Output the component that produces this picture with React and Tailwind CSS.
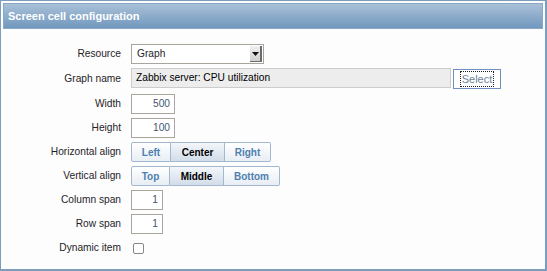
import React from 'react';

const font = { fontFamily: '"Liberation Sans", Arial, sans-serif' };

const Label = ({ children }) => (
  <div className="text-right text-[10.2px] text-[#1f2327]">{children}</div>
);

const NumInput = ({ value, w }) => (
  <div className={`${w} h-[20px] border border-[#aaa59c] bg-white flex items-center justify-end pr-[4px] text-[10.2px] text-[#3f5670]`}>
    {value}
  </div>
);

const Segmented = ({ items, active }) => (
  <div className="flex h-[20px]">
    {items.map(([label, w], i) => (
      <div
        key={label}
        className={`${w} h-full flex items-center justify-center text-[10px] font-bold border border-[#a3b8ce] ${i > 0 ? 'border-l-0' : ''} ${i === 0 ? 'rounded-l-[2px]' : ''} ${i === items.length - 1 ? 'rounded-r-[2px]' : ''} ${
          label === active
            ? 'bg-gradient-to-b from-[#f3f6fa] to-[#d2dde9] text-black border-[#8ea6c0]'
            : 'bg-gradient-to-b from-white to-[#e8eef5] text-[#4f7fae]'
        }`}
      >
        {label}
      </div>
    ))}
  </div>
);

export default function App() {
  return (
    <div style={font} className="w-[547px] h-[271px] bg-[#fdfdfd] border-l border-t border-r-2 border-b-2 border-[#7d9dbe] pt-[2px] px-[2px]">
      <div className="h-[26px] border border-[#8aa7c5] bg-gradient-to-b from-[#a9c0d7] to-[#7198be] flex items-center pl-[4px]">
        <span className="text-white font-bold text-[11px]">Screen cell configuration</span>
      </div>

      <div className="grid grid-cols-[118px_1fr] gap-x-[10px] gap-y-[4px] items-center mt-[15px]">
        <Label>Resource</Label>
        <div className="w-[133px] h-[20px] border border-[#aaa59c] bg-white flex items-center">
          <span className="flex-1 pl-[5px] text-[10.2px] text-[#1f2327]">Graph</span>
          <div className="w-[12px] h-[16px] mr-[1px] bg-gradient-to-b from-[#f0f0f0] to-[#cfcfcf] border-r-2 border-b border-[#6b6b6b] flex items-center justify-center">
            <svg width="7" height="4" viewBox="0 0 7 4"><path d="M0 0h7L3.5 4z" fill="#111" /></svg>
          </div>
        </div>

        <Label>Graph name</Label>
        <div className="flex items-start gap-[2px] h-[22px]">
          <div className="w-[320px] h-[20px] border border-[#cccccc] bg-[#ededed] flex items-center pl-[4px] text-[10.2px] text-black">
            Zabbix server: CPU utilization
          </div>
          <div className="mt-[1px] w-[48px] h-[20px] border border-[#6e8fbf] bg-white flex items-center justify-center">
            <span className="border border-dotted border-[#222] px-[1px] leading-[14px] text-[11px] text-[#6d7f99]">Select</span>
          </div>
        </div>

        <Label>Width</Label>
        <NumInput value="500" w="w-[44px]" />

        <Label>Height</Label>
        <NumInput value="100" w="w-[44px]" />

        <Label>Horizontal align</Label>
        <Segmented items={[['Left', 'w-[40px]'], ['Center', 'w-[54px]'], ['Right', 'w-[46px]']]} active="Center" />

        <Label>Vertical align</Label>
        <Segmented items={[['Top', 'w-[39px]'], ['Middle', 'w-[54px]'], ['Bottom', 'w-[56px]']]} active="Middle" />

        <Label>Column span</Label>
        <NumInput value="1" w="w-[32px]" />

        <Label>Row span</Label>
        <NumInput value="1" w="w-[32px]" />

        <Label>Dynamic item</Label>
        <div className="h-[20px] flex items-center">
          <div className="ml-[2px] w-[11px] h-[11px] rounded-[2px] border border-[#888] bg-white" />
        </div>
      </div>
    </div>
  );
}
